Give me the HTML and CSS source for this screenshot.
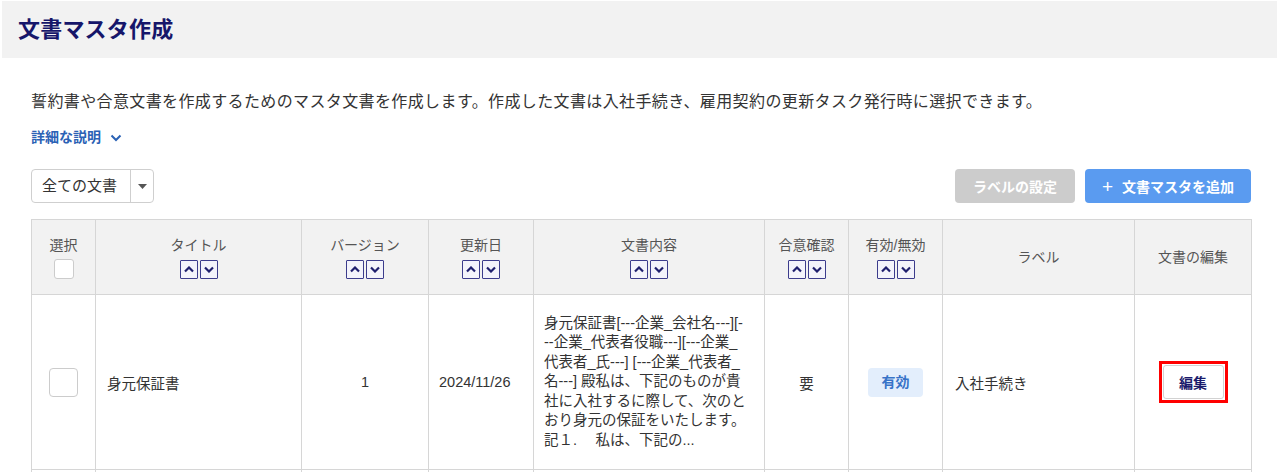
FILE: index.html
```html
<!DOCTYPE html>
<html lang="ja">
<head>
<meta charset="utf-8">
<link rel="stylesheet" href="styles.css">
</head>
<body>
<div class="page">
  <header class="page-header">
    <h1 class="page-title">文書マスタ作成</h1>
  </header>
  <main class="content">
    <p class="description">誓約書や合意文書を作成するためのマスタ文書を作成します。作成した文書は入社手続き、雇用契約の更新タスク発行時に選択できます。</p>
    <a class="detail-link">詳細な説明
      <svg class="detail-chevron" width="12" height="8" viewBox="0 0 12 8"><path d="M1.5 1.5 L6 6 L10.5 1.5" fill="none" stroke="#2b62b5" stroke-width="2"/></svg>
    </a>
    <div class="toolbar">
      <div class="select">
        <span class="select-label">全ての文書</span>
        <span class="select-caret"><svg width="9" height="5" viewBox="0 0 9 5"><path d="M0 0 H9 L4.5 5 Z" fill="#555"/></svg></span>
      </div>
      <div class="actions">
        <button class="btn btn-disabled">ラベルの設定</button>
        <button class="btn btn-primary"><span class="plus">+</span>文書マスタを追加</button>
      </div>
    </div>
    <table class="doc-table">
      <colgroup>
        <col class="c-sel"><col class="c-title"><col class="c-ver"><col class="c-date"><col class="c-body"><col class="c-agree"><col class="c-valid"><col class="c-label"><col class="c-edit">
      </colgroup>
      <thead>
        <tr>
          <th><div class="th-text">選択</div><div class="th-check"><span class="checkbox small"></span></div></th>
          <th><div class="th-text">タイトル</div><div class="sort"><span class="sort-btn"><svg viewBox="0 0 10 6"><path d="M1 5 L5 1 L9 5" /></svg></span><span class="sort-btn"><svg viewBox="0 0 10 6"><path d="M1 1 L5 5 L9 1" /></svg></span></div></th>
          <th><div class="th-text">バージョン</div><div class="sort"><span class="sort-btn"><svg viewBox="0 0 10 6"><path d="M1 5 L5 1 L9 5" /></svg></span><span class="sort-btn"><svg viewBox="0 0 10 6"><path d="M1 1 L5 5 L9 1" /></svg></span></div></th>
          <th><div class="th-text">更新日</div><div class="sort"><span class="sort-btn"><svg viewBox="0 0 10 6"><path d="M1 5 L5 1 L9 5" /></svg></span><span class="sort-btn"><svg viewBox="0 0 10 6"><path d="M1 1 L5 5 L9 1" /></svg></span></div></th>
          <th><div class="th-text">文書内容</div><div class="sort"><span class="sort-btn"><svg viewBox="0 0 10 6"><path d="M1 5 L5 1 L9 5" /></svg></span><span class="sort-btn"><svg viewBox="0 0 10 6"><path d="M1 1 L5 5 L9 1" /></svg></span></div></th>
          <th><div class="th-text">合意確認</div><div class="sort"><span class="sort-btn"><svg viewBox="0 0 10 6"><path d="M1 5 L5 1 L9 5" /></svg></span><span class="sort-btn"><svg viewBox="0 0 10 6"><path d="M1 1 L5 5 L9 1" /></svg></span></div></th>
          <th><div class="th-text">有効/無効</div><div class="sort"><span class="sort-btn"><svg viewBox="0 0 10 6"><path d="M1 5 L5 1 L9 5" /></svg></span><span class="sort-btn"><svg viewBox="0 0 10 6"><path d="M1 1 L5 5 L9 1" /></svg></span></div></th>
          <th><div class="th-text">ラベル</div></th>
          <th><div class="th-text">文書の編集</div></th>
        </tr>
      </thead>
      <tbody>
        <tr class="row">
          <td class="center"><span class="checkbox"></span></td>
          <td class="title-cell">身元保証書</td>
          <td class="center">1</td>
          <td class="date-cell">2024/11/26</td>
          <td class="body-cell">身元保証書[---企業_会社名---][-<br>--企業_代表者役職---][---企業_<br>代表者_氏---] [---企業_代表者_<br>名---] 殿私は、下記のものが貴<br>社に入社するに際して、次のと<br>おり身元の保証をいたします。<br>記１.　 私は、下記の...</td>
          <td class="center">要</td>
          <td class="center"><span class="badge">有効</span></td>
          <td class="label-cell">入社手続き</td>
          <td class="center"><span class="highlight"><button class="edit-btn">編集</button></span></td>
        </tr>
        <tr class="row-next">
          <td></td><td></td><td></td><td></td><td></td><td></td><td></td><td></td><td></td>
        </tr>
      </tbody>
    </table>
  </main>
</div>
</body>
</html>
```
FILE: styles.css
```css
* { box-sizing: border-box; }
html, body { margin: 0; padding: 0; background: #fff; }
body {
  font-family: "Liberation Sans", "Noto Sans CJK JP", sans-serif;
  color: #333;
  width: 1280px;
  height: 472px;
  overflow: hidden;
}
.page { padding: 1px 3px 0 2px; }
.page-header {
  background: #f2f2f2;
  height: 57px;
  display: flex;
  align-items: center;
  padding-left: 16px;
}
.page-title {
  margin: 0;
  font-size: 22px;
  line-height: 30px;
  font-weight: 700;
  color: #16166a;
  letter-spacing: 0.2px;
}
.content { padding: 33px 26px 0 29px; }
.description {
  margin: 0;
  font-size: 16px;
  line-height: 22px;
  color: #333;
  letter-spacing: 0.38px;
}
.detail-link {
  display: inline-flex;
  align-items: center;
  gap: 9px;
  margin-top: 14px;
  font-size: 14px;
  line-height: 20px;
  font-weight: 700;
  color: #2b62b5;
}
.detail-chevron { margin-top: 1px; }
.toolbar {
  display: flex;
  justify-content: space-between;
  align-items: center;
  margin-top: 22px;
}
.select {
  display: flex;
  height: 34px;
  border: 1px solid #cfcfcf;
  border-radius: 4px;
  background: #fff;
  width: 123px;
}
.select-label {
  font-size: 15px;
  line-height: 32px;
  color: #333;
  padding-left: 10px;
  width: 99px;
  border-right: 1px solid #cfcfcf;
}
.select-caret {
  flex: 1;
  display: flex;
  align-items: center;
  justify-content: center;
}
.actions { display: flex; gap: 10px; }
.btn {
  font-family: inherit;
  height: 34px;
  border: none;
  border-radius: 4px;
  color: #fff;
  font-size: 14px;
  font-weight: 700;
  padding: 0;
}
.btn-disabled { background: #cccccc; width: 120px; }
.btn-primary { background: #5a9bf0; width: 166px; }
.plus { font-size: 19px; font-weight: 400; margin-right: 9px; position: relative; top: 1px; }
.doc-table {
  margin-top: 16px;
  border-collapse: collapse;
  table-layout: fixed;
  width: 1221px;
}
.c-sel { width: 64px; }
.c-title { width: 206px; }
.c-ver { width: 127px; }
.c-date { width: 105px; }
.c-body { width: 231px; }
.c-agree { width: 84px; }
.c-valid { width: 94px; }
.c-label { width: 192px; }
.c-edit { width: 117px; }
.doc-table th, .doc-table td {
  border: 1px solid #d6d6d6;
  padding: 0;
}
.doc-table th {
  background: #f2f2f2;
  height: 75px;
  font-weight: 400;
  color: #555;
  font-size: 14px;
  text-align: center;
  vertical-align: middle;
}
.th-text { line-height: 20px; }
.th-check { display: flex; justify-content: center; margin-top: 4px; }
.sort {
  display: flex;
  justify-content: center;
  gap: 2px;
  margin-top: 5px;
}
.sort-btn {
  width: 18px;
  height: 19px;
  border: 1.5px solid #3c3c8c;
  border-radius: 1px;
  background: #f3f3fb;
  display: flex;
  align-items: center;
  justify-content: center;
}
.sort-btn svg {
  width: 10px;
  height: 7px;
  fill: none;
  stroke: #1f1f6e;
  stroke-width: 2.2;
}
.checkbox {
  display: inline-block;
  width: 29px;
  height: 29px;
  border: 1px solid #cccccc;
  border-radius: 4px;
  background: #fff;
  vertical-align: middle;
}
.checkbox.small { width: 20px; height: 20px; border-radius: 3px; }
.row td {
  height: 175px;
  font-size: 14.5px;
  color: #333;
  vertical-align: middle;
}
.center { text-align: center; }
.title-cell { padding-left: 11px !important; }
.date-cell { padding-left: 10px !important; }
.label-cell { padding-left: 12px !important; }
.body-cell {
  padding: 0 0 0 10px !important;
  line-height: 19.4px;
  white-space: nowrap;
}
.badge {
  display: inline-block;
  width: 55px;
  height: 29px;
  line-height: 29px;
  border-radius: 4px;
  background: #e3eefc;
  color: #3773c8;
  font-weight: 700;
  font-size: 14px;
}
.highlight {
  display: inline-flex;
  border: 3px solid #ff0000;
  padding: 1px;
  vertical-align: middle;
}
.edit-btn {
  font-family: inherit;
  width: 61px;
  height: 34px;
  background: #fff;
  border: 1px solid #d2d2d2;
  border-radius: 3px;
  color: #1a1a6b;
  font-weight: 700;
  font-size: 14px;
  padding: 0;
}
.row-next td { height: 2px; border-bottom: none; }
```
